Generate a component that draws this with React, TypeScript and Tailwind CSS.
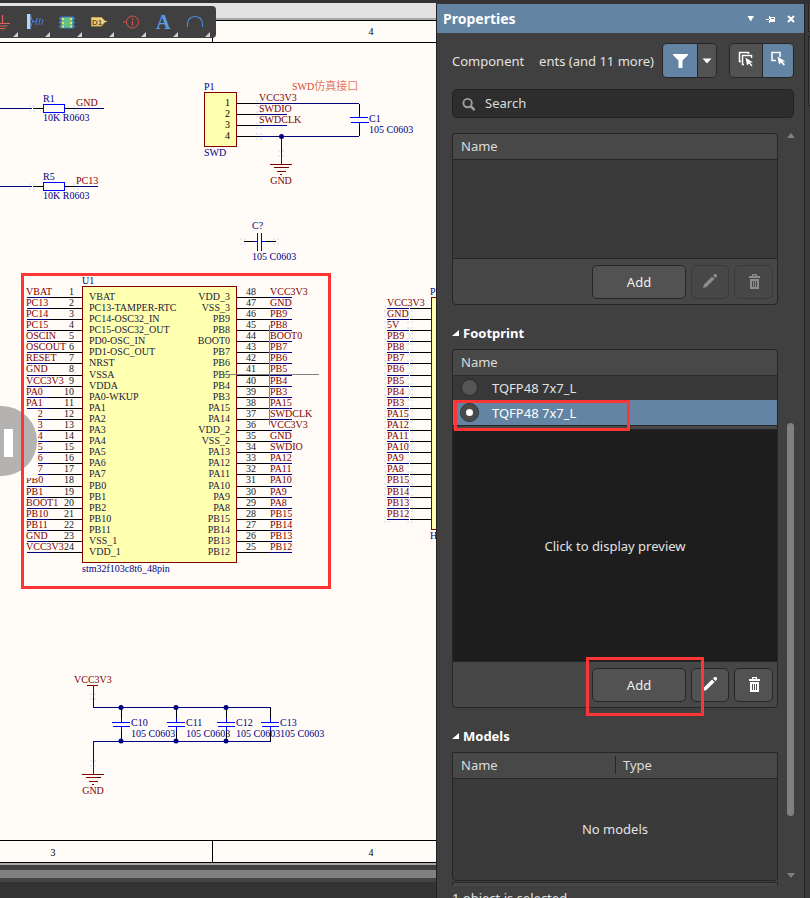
import React, { useState } from 'react';

const NAVY = '#000080';
const MAROON = '#800000';
const BLUE = '#0000ff';
const BLACK = '#000000';

const LEFT_NETS = [
    'VBAT', 'PC13', 'PC14', 'PC15', 'OSCIN', 'OSCOUT', 'RESET', 'GND', 'VCC3V3', 'PA0', 'PA1', 'PA2',
    'PA3', 'PA4', 'PA5', 'PA6', 'PA7', 'PB0', 'PB1', 'BOOT1', 'PB10', 'PB11', 'GND', 'VCC3V3'
];
const LEFT_PINS = [
    'VBAT', 'PC13-TAMPER-RTC', 'PC14-OSC32_IN', 'PC15-OSC32_OUT', 'PD0-OSC_IN', 'PD1-OSC_OUT', 'NRST', 'VSSA',
    'VDDA', 'PA0-WKUP', 'PA1', 'PA2', 'PA3', 'PA4', 'PA5', 'PA6', 'PA7', 'PB0', 'PB1', 'PB2', 'PB10', 'PB11',
    'VSS_1', 'VDD_1'
];
const RIGHT_PINS = [
    'VDD_3', 'VSS_3', 'PB9', 'PB8', 'BOOT0', 'PB7', 'PB6', 'PB5', 'PB4', 'PB3', 'PA15', 'PA14',
    'VDD_2', 'VSS_2', 'PA13', 'PA12', 'PA11', 'PA10', 'PA9', 'PA8', 'PB15', 'PB14', 'PB13', 'PB12'
];
const RIGHT_NETS = [
    'VCC3V3', 'GND', 'PB9', 'PB8', 'BOOT0', 'PB7', 'PB6', 'PB5', 'PB4', 'PB3', 'PA15', 'SWDCLK',
    'VCC3V3', 'GND', 'SWDIO', 'PA12', 'PA11', 'PA10', 'PA9', 'PA8', 'PB15', 'PB14', 'PB13', 'PB12'
];
const HEADER_NETS = [
    'VCC3V3', 'GND', '5V', 'PB9', 'PB8', 'PB7', 'PB6', 'PB5', 'PB4', 'PB3', 'PA15', 'PA12',
    'PA11', 'PA10', 'PA9', 'PA8', 'PB15', 'PB14', 'PB13', 'PB12'
];

// The grid pitch is slightly over 11px, so a pixel is gained every ten rows
const pinY = (i: number) => 297 + 11 * i + (i >= 7 ? 1 : 0) + (i >= 17 ? 1 : 0);
const netY = (i: number) => 295 + 11 * i + (i >= 8 ? 1 : 0) + (i >= 18 ? 1 : 0);

const Wire: React.FC<{ d: string; c?: string }> = ({ d, c = NAVY }) => (
    <path d={d} stroke={c} fill="none" strokeLinecap="square" shapeRendering="crispEdges" transform="translate(0.5 0.5)" />
);

const Label: React.FC<{ x: number; y: number; c?: string; anchor?: 'start' | 'middle' | 'end'; children: React.ReactNode }> = ({
    x, y, c = NAVY, anchor = 'start', children
}) => (
    <text x={x} y={y} fill={c} textAnchor={anchor}>{children}</text>
);

// Four faint grid dots around an electrical hot spot
const Spot: React.FC<{ x: number; y: number }> = ({ x, y }) => (
    <path
        d={`M${x - 3} ${y - 3}h2v2h-2zM${x + 1} ${y - 3}h2v2h-2zM${x - 3} ${y + 2}h2v2h-2zM${x + 1} ${y + 2}h2v2h-2z`}
        fill="#e3ebf6"
    />
);

const Resistor: React.FC<{ y: number; name: string; net: string; end: number }> = ({ y, name, net, end }) => (
    <g>
        <Spot x={32} y={y} />
        <Spot x={76} y={y} />
        <Wire d={`M0 ${y}H31`} />
        <Wire d={`M33 ${y}H42M65 ${y}H75`} c={BLACK} />
        <Wire d={`M76 ${y}H${end}`} />
        <Wire d={`M43 ${y - 4}h21v8h-21z`} c={BLUE} />
        <Label x={43} y={y - 6}>{name}</Label>
        <Label x={76} y={y - 2} c={MAROON}>{net}</Label>
        <Label x={43} y={y + 13}>10K R0603</Label>
    </g>
);

const Capacitor: React.FC<{ x: number; name: string }> = ({ x, name }) => (
    <g>
        <Wire d={`M${x} 708V717M${x} 731V740`} c={BLACK} />
        <Wire d={`M${x} 718V722M${x} 726V730M${x - 9} 722h17M${x - 8} 726h16`} c={BLUE} />
        <Label x={x + 10} y={726}>{name}</Label>
        <Label x={x + 10} y={737}>105 C0603</Label>
    </g>
);

const Ground: React.FC<{ x: number; y: number }> = ({ x, y }) => (
    <g>
        <Wire d={`M${x} ${y - 10}V${y}M${x - 11} ${y}h21M${x - 7} ${y + 3}h14M${x - 4} ${y + 7}h8M${x - 1} ${y + 10}h1`} c={MAROON} />
        <Label x={x} y={y + 20} c={MAROON} anchor="middle">GND</Label>
    </g>
);

const Schematic = () => (
    <svg className="block w-full h-[843px] shrink-0 bg-[#fffcf8]" fontFamily='"Liberation Serif", "Noto Sans CJK SC", serif' fontSize="10">
        <g transform="translate(0 -20)">
            {/* Sheet frame */}
            <rect x="0" y="20" width="100%" height="1" />
            <rect x="0" y="42" width="100%" height="1" />
            <rect x="0" y="840" width="100%" height="1" />
            <rect x="0" y="862" width="100%" height="1" />
            <Wire d="M212 20V42M212 840V862" c={BLACK} />
            <Label x={371} y={35} c={BLACK} anchor="middle">4</Label>
            <Label x={53} y={856} c={BLACK} anchor="middle">3</Label>
            <Label x={371} y={856} c={BLACK} anchor="middle">4</Label>

            <Resistor y={108} name="R1" net="GND" end={103} />
            <Resistor y={186} name="R5" net="PC13" end={97} />

            {/* SWD connector */}
            <rect x="204.5" y="92.5" width="32" height="54" fill="#ffffb0" stroke={MAROON} />
            <Label x={204} y={90}>P1</Label>
            <Label x={204} y={156}>SWD</Label>
            {[103, 114, 125, 136].map((y, i) => (
                <g key={y}>
                    <Spot x={259} y={y} />
                    <Wire d={`M237 ${y}H258`} c={BLACK} />
                    <Wire d={`M259 ${y}H${i === 1 || i === 2 ? 286 : 358}`} />
                    <Label x={225} y={y + 3} c={BLACK}>{i + 1}</Label>
                </g>
            ))}
            <Label x={259} y={101} c={MAROON}>VCC3V3</Label>
            <Label x={259} y={112} c={MAROON}>SWDIO</Label>
            <Label x={259} y={123} c={MAROON}>SWDCLK</Label>
            <text x="292" y="90" fill="#d2452f">SWD<tspan fontSize="11" fill="#e27a66">仿真接口</tspan></text>
            <Wire d="M359 104V113M359 125V135" c={BLACK} />
            <Wire d="M359 114V117M359 122V125M350 117h17M351 122h17" c={BLUE} />
            <Label x={369} y={122}>C1</Label>
            <Label x={369} y={133}>105 C0603</Label>
            <Spot x={281} y={153} />
            <Wire d="M281 136V153" />
            <circle cx="281.5" cy="136.5" r="2.5" fill={NAVY} />
            <Ground x={281} y={164} />

            {/* Loose capacitor */}
            <Spot x={243} y={241} />
            <Spot x={276} y={241} />
            <Wire d="M244 241H252M266 241H275" c={BLACK} />
            <Wire d="M253 241H257M261 241H265M257 233v17M261 233v17" c={BLUE} />
            <Label x={252} y={229}>C?</Label>
            <Label x={252} y={260}>105 C0603</Label>

            {/* MCU */}
            <rect x="82.5" y="286.5" width="154" height="276" fill="#ffffb0" stroke={MAROON} />
            <Label x={82} y={284}>U1</Label>
            <Label x={82} y={572}>stm32f103c8t6_48pin</Label>
            {LEFT_PINS.map((pin, i) => (
                <g key={i}>
                    <Wire d={`M27 ${pinY(i)}H48M270 ${pinY(i)}H291`} />
                    <Wire d={`M49 ${pinY(i)}H81M237 ${pinY(i)}H269`} c={BLACK} />
                    <Label x={26} y={netY(i)} c={MAROON}>{LEFT_NETS[i]}</Label>
                    <Label x={74} y={netY(i)} c="#202020" anchor="end">{i + 1}</Label>
                    <Label x={89} y={pinY(i) + 3} c="#202040">{pin}</Label>
                    <Label x={230} y={pinY(i) + 3} c="#202040" anchor="end">{RIGHT_PINS[i]}</Label>
                    <Label x={246} y={netY(i)} c="#202020">{48 - i}</Label>
                    <Label x={270} y={netY(i)} c={MAROON}>{RIGHT_NETS[i]}</Label>
                </g>
            ))}
            <Wire d="M223 374H318M269 325V424" c="#808080" />

            {/* Header connector on the right */}
            <rect x="431.5" y="297.5" width="40" height="232" fill="#ffffb0" stroke={MAROON} />
            <Label x={430} y={295}>P</Label>
            <Label x={430} y={539}>H</Label>
            {HEADER_NETS.map((net, i) => (
                <g key={net}>
                    <Spot x={387} y={pinY(i + 1)} />
                    <Spot x={410} y={pinY(i + 1)} />
                    <Wire d={`M387 ${pinY(i + 1)}H408`} />
                    <Wire d={`M410 ${pinY(i + 1)}H430`} c={BLACK} />
                    <Label x={387} y={netY(i + 1)} c={MAROON}>{net}</Label>
                </g>
            ))}

            {/* Decoupling capacitors */}
            <Spot x={93} y={696} />
            <Spot x={93} y={763} />
            <Label x={74} y={683} c={MAROON}>VCC3V3</Label>
            <Wire d="M87 685H97M93 685V696" c={MAROON} />
            <Wire d="M93 697V707H270M93 763V741H270" />
            <Capacitor x={121} name="C10" />
            <Capacitor x={176} name="C11" />
            <Capacitor x={226} name="C12" />
            <Capacitor x={270} name="C13" />
            {[121, 176, 226].map(x => (
                <g key={x} fill={NAVY}>
                    <circle cx={x} cy="707.5" r="2.5" />
                    <circle cx={x} cy="741" r="2.5" />
                </g>
            ))}
            <Ground x={93} y={774} />

            {/* Pull-out handle and highlight frame */}
            <rect x="24" y="409" width="14" height="69" fill="#fffcf8" />
            <circle cx="2" cy="441" r="35" fill="#b5b3b1" />
            <rect x="4" y="429" width="9" height="28" fill="#ffffff" />
            <rect x="22.5" y="274.5" width="307" height="313" fill="none" stroke="#ff3535" strokeWidth="3" />
        </g>
    </svg>
);

const TOOLS: { name: string; icon: React.ReactNode }[] = [
    {
        name: 'Ground port',
        icon: <path d="M10.500 5v8M3 13.500h15M5.500 16h10M7.500 18.500h6M10 20.500h1" stroke="#e0605c" strokeWidth="1.2" fill="none" />
    },
    {
        name: 'Bus entry',
        icon: (
            <g>
                <rect x="3" y="4" width="3.5" height="15" fill="#b4d4fa" />
                <path d="M6.500 5q1 6 3 6.500q-2 .5-3 6.500M8 11.500h4M11.500 15l1.500-6M14.500 15l1.500-6M17.500 15l1.500-6M12 9h2M15 9h2" stroke="#4a7fd8" fill="none" />
            </g>
        )
    },
    {
        name: 'Part',
        icon: (
            <g>
                <path d="M3 8.500h16M3 12.500h16M3 16.500h16" stroke="#4a8de0" strokeWidth="1.5" />
                <rect x="5" y="7" width="12" height="11" fill="#62c088" stroke="#3e80d8" />
                <path d="M6 8h2v2h-2zM6 12h2v2h-2zM6 15.500h2v2h-2zM14 8h2v2h-2zM14 12h2v2h-2zM14 15.500h2v2h-2z" fill="#f5dc4c" />
            </g>
        )
    },
    {
        name: 'Net label',
        icon: (
            <g>
                <path d="M3.500 7.500h10l4 4l-4 4.500h-10z" fill="#ecd184" stroke="#d0a548" />
                <path d="M17 11.500h2" stroke="#e8c96e" />
                <text x="4" y="15" fontSize="8" fontWeight="bold" fontFamily='"Liberation Sans", sans-serif' fill="#6b5418">D1</text>
            </g>
        )
    },
    {
        name: 'Directive',
        icon: (
            <g stroke="#e0504c" fill="none">
                <circle cx="12.500" cy="12" r="6" />
                <path d="M3 12h4M12.500 10.500v5M12.500 8v1.200" strokeWidth="1.2" />
            </g>
        )
    },
    {
        name: 'Text',
        icon: <text x="4" y="19" fontSize="20" fontWeight="bold" fontFamily='"Liberation Serif", serif' fill="#5b9be6">A</text>
    },
    {
        name: 'Arc',
        icon: <path d="M3.500 17v-3.500a7.500 7 0 0 1 15 0v3.500" stroke="#4a8ad8" strokeWidth="1.200" fill="none" />
    }
];

const Toolbar = () => (
    <div className="absolute left-0 top-[6px] z-10 flex h-8 overflow-hidden rounded-r bg-[#404040] pr-1">
        {TOOLS.map(tool => (
            <button key={tool.name} aria-label={tool.name} className="relative flex h-8 w-8 items-center justify-center first:-ml-3">
                <svg viewBox="0 0 24 24" className="h-6 w-6">{tool.icon}</svg>
                <span className="absolute bottom-px right-[2px] h-[5px] w-[5px] bg-[#d0d0d0] [clip-path:polygon(100%_0,100%_100%,0_100%)]"></span>
            </button>
        ))}
    </div>
);

const PencilIcon = () => (
    <svg viewBox="0 0 16 16" className="mb-[2px] h-4 w-4 fill-current">
        <path d="M1 15l1-3.500 8-8 2.500 2.500-8 8zM11 2.500L12.500 1h1.500l1 1v1.500L13.500 5z" />
    </svg>
);

const TrashIcon = () => (
    <svg viewBox="0 0 16 16" className="mb-[2px] h-4 w-4 fill-current">
        <path fillRule="evenodd" d="M3 3h3V1h5v2h3v2H3zM7.500 2v1h2V2zM4 6h9v10H4zM6 8v6h1V8zM8 8v6h1V8zM10 8v6h1V8z" />
    </svg>
);

const TableFooter: React.FC<{ disabled?: boolean; highlight?: boolean }> = ({ disabled, highlight }) => {
    const iconButton = disabled
        ? 'border-[#3a3a3a] bg-[#474747] text-[#8c8c8c]'
        : 'border-[#262626] bg-[#525252] text-white';
    return (
        <div className="relative flex h-[47px] items-center justify-end gap-[5px] rounded-b border border-[#262626] bg-[#474747] pr-1">
            <button className="h-[34px] w-[94px] rounded-[5px] border border-[#262626] bg-[#525252] text-[#f0f0f0]">Add</button>
            <button disabled={disabled} aria-label="Edit" className={`flex h-[34px] w-[38px] items-center justify-center rounded-[5px] border ${iconButton}`}>
                <PencilIcon />
            </button>
            <button disabled={disabled} aria-label="Delete" className={`flex h-[34px] w-[39px] items-center justify-center rounded-[5px] border ${iconButton}`}>
                <TrashIcon />
            </button>
            {highlight && <div className="pointer-events-none absolute -top-[5px] right-[73px] h-[59px] w-[118px] border-[3px] border-[#ff3535]"></div>}
        </div>
    );
};

const SectionTitle: React.FC<{ children: React.ReactNode }> = ({ children }) => (
    <h2 className="flex h-11 items-center gap-1 pt-3 font-bold text-white">
        <svg viewBox="0 0 7 7" className="h-[7px] w-[7px] fill-white"><path d="M7 0v6H0z" /></svg>
        {children}
    </h2>
);

const headCell = 'h-[25px] bg-[#484848] px-2 text-left font-normal text-[#dcdcdc]';

const PropertiesPanel = () => {
    const [selected, setSelected] = useState(1);
    const footprints = ['TQFP48 7x7_L', 'TQFP48 7x7_L'];

    return (
        <aside className="flex w-[369px] shrink-0 flex-col border-x border-[#222222] bg-[#404040] text-[#e2e2e2]">
            <header className="flex h-[29px] shrink-0 items-center justify-between bg-[#6384a3] pl-[6px] pr-[9px] text-white">
                <h1 className="text-sm font-bold">Properties</h1>
                <div className="flex items-center gap-[11px]">
                    <button aria-label="Panel menu"><svg viewBox="0 0 8 6" className="h-[6px] w-2 fill-white"><path d="M0.500 0h6.500L3.700 5.500z" /></svg></button>
                    <button aria-label="Pin">
                        <svg viewBox="0 0 10 8" className="h-2 w-[10px] fill-white" shapeRendering="crispEdges">
                            <path fillRule="evenodd" d="M0 4h4v1h-4zM3 1h1v7h-1zM4 2h5v5h-5zM5 3v1h3v-1z" />
                        </svg>
                    </button>
                    <button aria-label="Close"><svg viewBox="0 0 8 8" className="h-2 w-2" stroke="#fff" strokeWidth="2"><path d="M1 1l6 6M7 1l-6 6" /></svg></button>
                </div>
            </header>

            <div className="flex shrink-0 items-center pl-[15px] pr-[10px] pt-[10px]">
                <span>Component</span>
                <span className="ml-auto mr-2 whitespace-nowrap">ents (and 11 more)</span>
                <div className="flex h-[35px] overflow-hidden rounded-[5px] border border-[#262626]">
                    <button aria-label="Filter" className="flex w-[35px] items-center justify-center border-r border-[#262626] bg-[#6384a3]">
                        <svg viewBox="0 0 15 14" className="h-[14px] w-[15px] fill-white"><path d="M0 0h15v1L9.500 6.500V14h-4V6.500L0 1z" /></svg>
                    </button>
                    <button aria-label="Filter options" className="flex w-[18px] items-center justify-center bg-[#525252]">
                        <svg viewBox="0 0 10 6" className="h-[6px] w-[10px] fill-white"><path d="M0.500 0.500h9L5 5.500z" /></svg>
                    </button>
                </div>
                <div className="ml-3 flex h-[35px] overflow-hidden rounded-[5px] border border-[#262626]">
                    <button aria-label="Select all objects" className="flex w-[33px] items-center justify-center border-r border-[#262626] bg-[#525252]">
                        <svg viewBox="0 0 16 16" className="mb-1 h-4 w-4" fill="none" stroke="#fff">
                            <path d="M3 10.500H1.500v-9h9V3M6 13.500H4.500v-9h9V7" strokeWidth="1.500" />
                            <path d="M7.500 6.500l1.500 8 2-2 2.500 3 1-1-2.500-3h3z" fill="#fff" stroke="none" />
                        </svg>
                    </button>
                    <button aria-label="Select object" className="flex w-[30px] items-center justify-center bg-[#6384a3]">
                        <svg viewBox="0 0 16 16" className="mb-1 h-4 w-4" fill="none" stroke="#fff">
                            <path d="M6 9.500H2v-8h8V6" strokeWidth="1.500" />
                            <path d="M7.500 5.500l1.500 8 2-2 2.500 3 1.500-1-2.500-3h3z" fill="#fff" stroke="none" />
                        </svg>
                    </button>
                </div>
            </div>

            <label className="ml-[15px] mr-[10px] mt-[11px] flex h-[29px] shrink-0 items-center gap-2 rounded-[5px] border border-[#222222] bg-[#2d2d2d] pl-[9px]">
                <svg viewBox="0 0 14 14" className="h-[14px] w-[14px]" fill="none" stroke="#a0a0a0" strokeWidth="2">
                    <circle cx="6" cy="6" r="4.500" /><path d="M9.500 9.500l4 4" strokeWidth="2.500" />
                </svg>
                <input type="text" aria-label="Search" placeholder="Search" className="w-full bg-transparent pb-[2px] pl-[2px] outline-none placeholder:text-[#dcdcdc]" />
            </label>

            <div className="mt-[15px] flex min-h-0 flex-1 overflow-hidden pl-[15px] pr-[9px]">
                <div className="min-w-0 flex-1">
                    {/* Parameters */}
                    <div className="overflow-hidden rounded-t border border-b-0 border-[#262626] bg-[#3a3a3a]">
                        <table className="w-full">
                            <thead><tr className="border-b border-[#262626]"><th className={headCell}>Name</th></tr></thead>
                            <tbody><tr><td className="h-[99px]"></td></tr></tbody>
                        </table>
                    </div>
                    <TableFooter disabled />

                    <SectionTitle>Footprint</SectionTitle>
                    <div className="relative">
                        <div className="overflow-hidden rounded-t border border-b-0 border-[#262626] bg-[#383838]">
                            <table className="w-full">
                                <thead><tr className="border-b border-[#2c2c2c]"><th className={headCell}>Name</th></tr></thead>
                                <tbody>
                                    {footprints.map((name, i) => (
                                        <tr key={i} className={selected === i ? 'bg-[#6384a3] text-white' : ''}>
                                            <td className="h-[25px] px-2">
                                                <label className="flex items-center gap-[14px]">
                                                    <input
                                                        type="radio"
                                                        name="footprint"
                                                        checked={selected === i}
                                                        onChange={() => setSelected(i)}
                                                        className="h-[17px] w-[17px] appearance-none rounded-full border border-[#2a2a2a] bg-[#555555] checked:border-[5px] checked:border-[#4a4a4a] checked:bg-white checked:outline checked:outline-[#2a2a2a]"
                                                    />
                                                    {name}
                                                </label>
                                            </td>
                                        </tr>
                                    ))}
                                </tbody>
                            </table>
                        </div>
                        <div className="h-1 border border-b-0 border-[#262626] bg-[#474747]"></div>
                        <div className="pointer-events-none absolute left-[2px] top-[51px] h-[31px] w-[176px] border-[3px] border-[#ff3535]"></div>
                    </div>
                    <div className="flex h-[232px] items-center justify-center border border-b-0 border-[#262626] bg-[#1d1d1d]">
                        Click to display preview
                    </div>
                    <TableFooter highlight />

                    <SectionTitle>Models</SectionTitle>
                    <div className="overflow-hidden rounded-b border border-[#262626] bg-[#3a3a3a]">
                        <table className="w-full table-fixed">
                            <thead>
                                <tr className="border-b border-[#262626]">
                                    <th className={headCell}>Name</th>
                                    <th className={headCell}><span className="-ml-2 border-l border-[#262626] pl-[7px]">Type</span></th>
                                </tr>
                            </thead>
                            <tbody><tr><td colSpan={2} className="h-[102px] text-center">No models</td></tr></tbody>
                        </table>
                    </div>
                    <div className="mt-px h-[46px] border border-[#262626] bg-[#474747]"></div>
                </div>

                {/* Scroll bar */}
                <div className="ml-[9px] flex w-2 shrink-0 flex-col items-center">
                    <svg viewBox="0 0 8 5" className="h-[5px] w-2 fill-[#808080]"><path d="M4 0l4 5H0z" /></svg>
                    <div className="flex w-full flex-1 flex-col">
                        <div className="flex-[285]"></div>
                        <div className="w-[7px] flex-[393] rounded-full bg-[#808080]"></div>
                        <div className="flex-[57]"></div>
                    </div>
                    <svg viewBox="0 0 8 5" className="mb-2 h-[5px] w-2 fill-[#808080]"><path d="M0 0h8L4 5z" /></svg>
                </div>
            </div>
            <div className="h-3 shrink-0 overflow-hidden pl-[15px] leading-6">1 object is selected</div>
        </aside>
    );
};

export default function App() {
    return (
        <div className='flex h-screen overflow-hidden bg-[#333333] text-[13px] leading-5 font-["Noto_Sans",sans-serif]'>
            <main className="relative flex min-w-0 flex-1 flex-col overflow-hidden pt-[3px]">
                <Toolbar />
                <div className="h-[17px] shrink-0 border-b-2 border-[#a8a8a8] bg-[#e2e2e2]"></div>
                <Schematic />
                <div className="h-[2px] shrink-0 bg-[#a9aba6]"></div>
                <div className="h-[5px] shrink-0 bg-[#404040]"></div>
                <div className="h-2 shrink-0 bg-[#808080]"></div>
                <div className="h-1 shrink-0 bg-[#444444]"></div>
            </main>
            <div className="flex shrink-0 pt-1">
                <PropertiesPanel />
                <div className="flex w-[5px] flex-col gap-1 bg-[#3a3a3a] pl-[3px]">
                    <div className="h-7 rounded-bl border-b border-l border-[#222222] bg-[#484848]"></div>
                    <div className="h-[70px] rounded-l border-y border-l border-[#222222] bg-[#484848]"></div>
                </div>
            </div>
        </div>
    );
}
